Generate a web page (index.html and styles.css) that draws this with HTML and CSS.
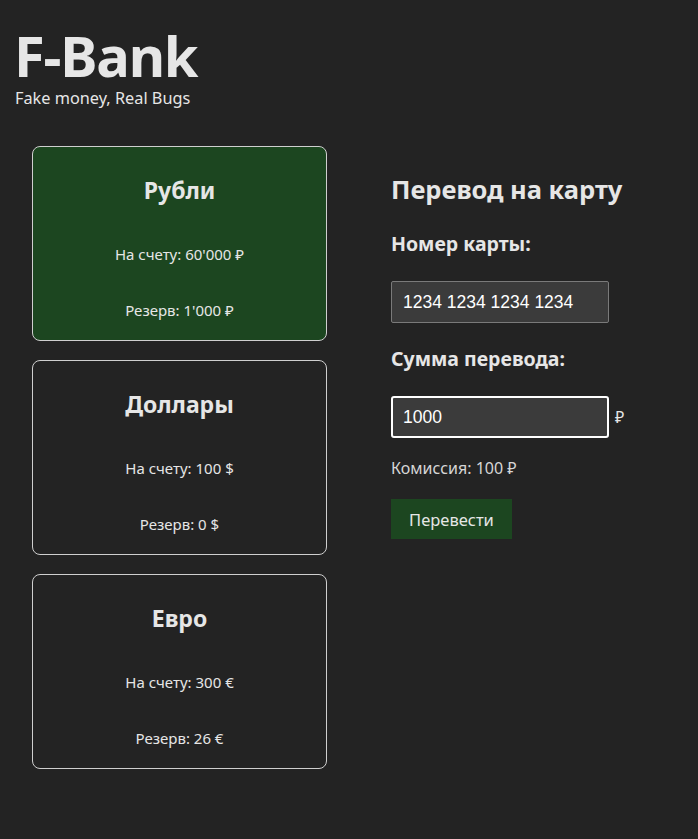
FILE: index.html
```html
<!DOCTYPE html>
<html lang="ru">
<head>
<meta charset="utf-8">
<title>F-Bank</title>
<link rel="stylesheet" href="styles.css">
</head>
<body>
<header class="header">
  <h1 class="logo">F-Bank</h1>
  <div class="tagline">Fake money, Real Bugs</div>
</header>
<main class="main">
  <section class="accounts">
    <div class="card card-active">
      <h2 class="card-title">Рубли</h2>
      <p class="card-line">На счету: 60'000 ₽</p>
      <p class="card-line">Резерв: 1'000 ₽</p>
    </div>
    <div class="card">
      <h2 class="card-title">Доллары</h2>
      <p class="card-line">На счету: 100 $</p>
      <p class="card-line">Резерв: 0 $</p>
    </div>
    <div class="card">
      <h2 class="card-title">Евро</h2>
      <p class="card-line">На счету: 300 €</p>
      <p class="card-line">Резерв: 26 €</p>
    </div>
  </section>
  <section class="transfer">
    <h3 class="transfer-title">Перевод на карту</h3>
    <h4 class="label">Номер карты:</h4>
    <div class="field-row">
      <input class="input" type="text" value="1234 1234 1234 1234">
    </div>
    <h4 class="label">Сумма перевода:</h4>
    <div class="field-row">
      <input class="input input-focus" type="text" value="1000">
      <span class="currency">₽</span>
    </div>
    <div class="fee">Комиссия: 100 ₽</div>
    <button class="btn">Перевести</button>
  </section>
</main>
</body>
</html>
```

FILE: styles.css
```css
* { box-sizing: border-box; }
html, body {
  margin: 0;
  background: #232323;
}
body {
  font-family: "Noto Sans", "Open Sans", sans-serif;
  color: #e6e6e6;
  width: 698px;
  height: 839px;
}
.header {
  padding: 27px 0 0 15px;
}
.logo {
  margin: 0;
  font-size: 56px;
  line-height: 1;
  font-weight: 700;
  letter-spacing: -1.2px;
  margin-left: -1px;
  color: #e6e6e6;
}
.tagline {
  font-size: 16.3px;
  line-height: 20px;
  margin-top: 5px;
}
.main {
  display: flex;
  gap: 64px;
  padding: 38px 0 0 32px;
}
.accounts {
  display: flex;
  flex-direction: column;
  gap: 19px;
  width: 295px;
}
.card {
  height: 195px;
  border: 1px solid #cfcfcf;
  border-radius: 8px;
  display: flex;
  flex-direction: column;
  align-items: center;
  padding-top: 28px;
}
.card-active {
  background: #1c4620;
}
.card-title {
  margin: 0;
  font-size: 23px;
  line-height: 30px;
  font-weight: 700;
}
.card-line {
  margin: 0;
  font-size: 15px;
  line-height: 20px;
}
.card-title + .card-line { margin-top: 39px; }
.card-line + .card-line { margin-top: 36px; }
.transfer {
  display: flex;
  flex-direction: column;
  align-items: flex-start;
  padding-top: 28px;
}
.transfer-title {
  margin: 0;
  font-size: 25.5px;
  line-height: 30px;
  font-weight: 700;
}
.label {
  margin: 0;
  font-size: 19.5px;
  line-height: 24px;
  font-weight: 700;
}
.transfer-title + .label { margin-top: 28px; }
.field-row {
  display: flex;
  align-items: center;
  gap: 6px;
  margin: 25px 0 24px;
}
.input {
  width: 218px;
  height: 42px;
  background: #3b3b3b;
  border: 1px solid #7a7a7a;
  border-radius: 2px;
  color: #ffffff;
  font-family: "Liberation Sans", Arial, sans-serif;
  font-size: 17.5px;
  padding: 0 11px;
  outline: none;
}
.input-focus {
  border: 2px solid #ffffff;
  border-radius: 3px;
  padding: 0 10px;
}
.currency {
  font-size: 16px;
  color: #e6e6e6;
}
.fee {
  font-size: 16px;
  line-height: 20px;
  color: #d6d6d6;
  margin-top: -4px;
}
.btn {
  margin-top: 21px;
  width: 121px;
  height: 40px;
  background: #1c4620;
  border: none;
  color: #e6e6e6;
  font-family: "Noto Sans", "Open Sans", sans-serif;
  font-size: 16.5px;
  padding: 0;
}
```
